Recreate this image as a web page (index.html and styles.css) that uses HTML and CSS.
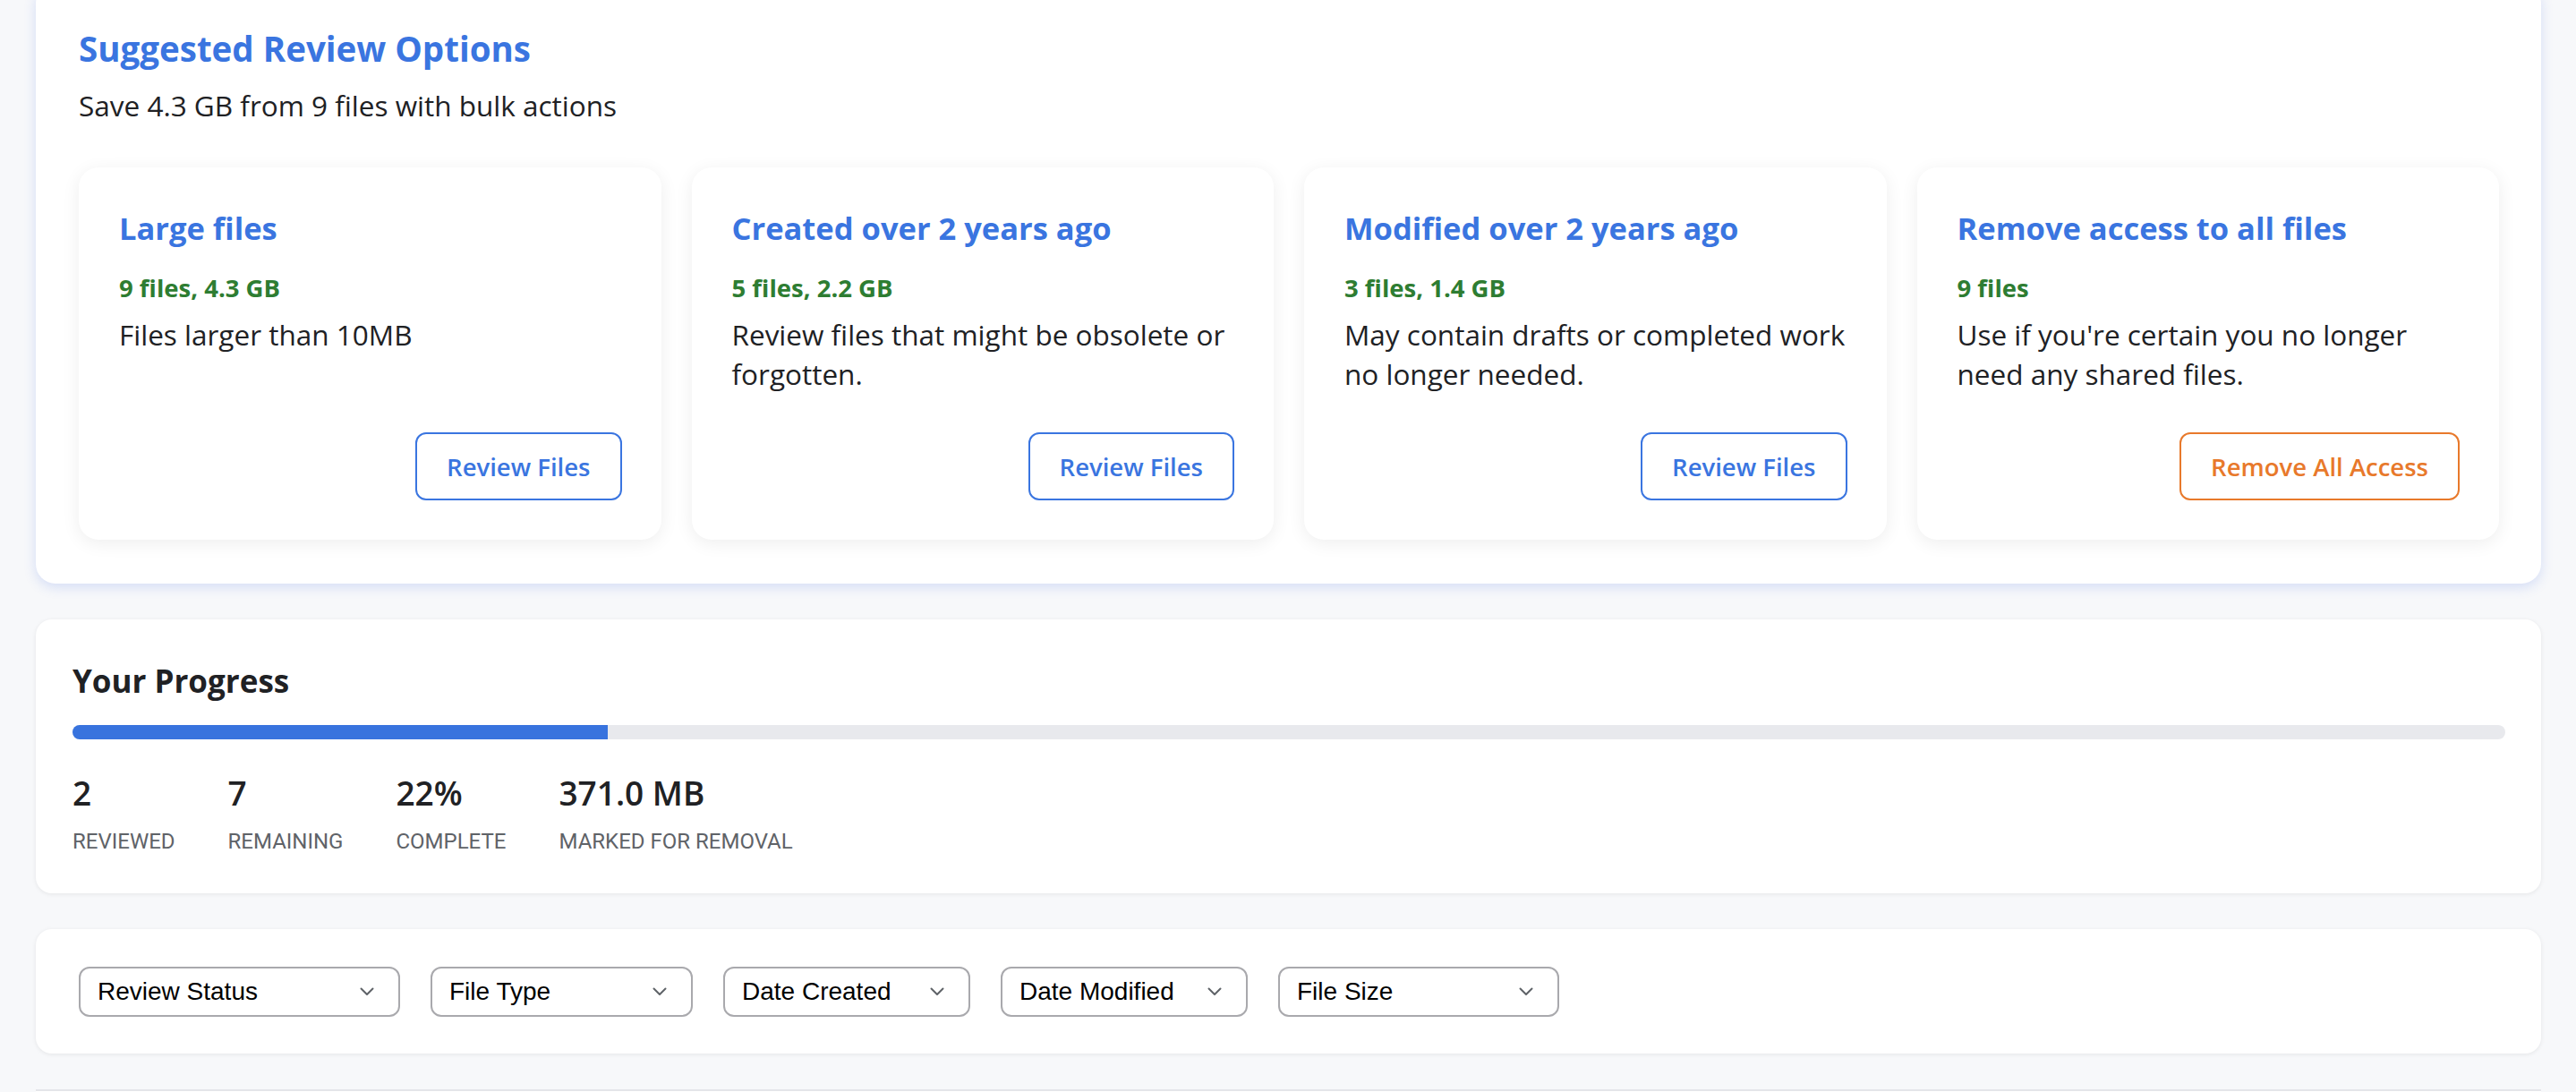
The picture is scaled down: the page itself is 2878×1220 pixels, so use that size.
FILE: index.html
```html
<!DOCTYPE html>
<html lang="en">
<head>
<meta charset="utf-8">
<title>Review Options</title>
<link rel="stylesheet" href="styles.css">
</head>
<body>
<div class="page">
  <section class="suggest">
    <h1 class="suggest-title">Suggested Review Options</h1>
    <p class="suggest-sub">Save 4.3 GB from 9 files with bulk actions</p>
    <div class="options">
      <article class="option">
        <h2 class="option-title">Large files</h2>
        <div class="option-count">9 files, 4.3 GB</div>
        <p class="option-desc">Files larger than 10MB</p>
        <button class="btn btn-blue">Review Files</button>
      </article>
      <article class="option">
        <h2 class="option-title">Created over 2 years ago</h2>
        <div class="option-count">5 files, 2.2 GB</div>
        <p class="option-desc">Review files that might be obsolete or forgotten.</p>
        <button class="btn btn-blue">Review Files</button>
      </article>
      <article class="option">
        <h2 class="option-title">Modified over 2 years ago</h2>
        <div class="option-count">3 files, 1.4 GB</div>
        <p class="option-desc">May contain drafts or completed work no longer needed.</p>
        <button class="btn btn-blue">Review Files</button>
      </article>
      <article class="option">
        <h2 class="option-title">Remove access to all files</h2>
        <div class="option-count">9 files</div>
        <p class="option-desc">Use if you're certain you no longer need any shared files.</p>
        <button class="btn btn-orange">Remove All Access</button>
      </article>
    </div>
  </section>

  <section class="card progress">
    <h2 class="progress-title">Your Progress</h2>
    <div class="track"><div class="fill" style="width:22%"></div></div>
    <div class="stats">
      <div class="stat"><div class="stat-num">2</div><div class="stat-label">Reviewed</div></div>
      <div class="stat"><div class="stat-num">7</div><div class="stat-label">Remaining</div></div>
      <div class="stat"><div class="stat-num">22%</div><div class="stat-label">Complete</div></div>
      <div class="stat"><div class="stat-num">371.0 MB</div><div class="stat-label">Marked for removal</div></div>
    </div>
  </section>

  <section class="card filters">
    <div class="select sel-status"><span>Review Status</span><svg class="chev" viewBox="0 0 16 10" width="16" height="10"><path d="M1.5 1.5 L8 8 L14.5 1.5" fill="none" stroke="#5f6368" stroke-width="2" stroke-linecap="round" stroke-linejoin="round"/></svg></div>
    <div class="select sel-type"><span>File Type</span><svg class="chev" viewBox="0 0 16 10" width="16" height="10"><path d="M1.5 1.5 L8 8 L14.5 1.5" fill="none" stroke="#5f6368" stroke-width="2" stroke-linecap="round" stroke-linejoin="round"/></svg></div>
    <div class="select sel-created"><span>Date Created</span><svg class="chev" viewBox="0 0 16 10" width="16" height="10"><path d="M1.5 1.5 L8 8 L14.5 1.5" fill="none" stroke="#5f6368" stroke-width="2" stroke-linecap="round" stroke-linejoin="round"/></svg></div>
    <div class="select sel-modified"><span>Date Modified</span><svg class="chev" viewBox="0 0 16 10" width="16" height="10"><path d="M1.5 1.5 L8 8 L14.5 1.5" fill="none" stroke="#5f6368" stroke-width="2" stroke-linecap="round" stroke-linejoin="round"/></svg></div>
    <div class="select sel-size"><span>File Size</span><svg class="chev" viewBox="0 0 16 10" width="16" height="10"><path d="M1.5 1.5 L8 8 L14.5 1.5" fill="none" stroke="#5f6368" stroke-width="2" stroke-linecap="round" stroke-linejoin="round"/></svg></div>
  </section>

  <section class="card table-card"></section>
</div>
</body>
</html>
```

FILE: styles.css
```css
html, body {
  margin: 0;
  height: 1220px;
  overflow: hidden;
}
body {
  background: #f7f8fa;
  font-family: "Open Sans", "Lato", sans-serif;
  color: #202124;
}
.page {
  display: flex;
  flex-direction: column;
  gap: 40px;
  padding: 0 39px 0 40px;
  margin-top: -18px;
}
.suggest {
  background: #fff;
  border-radius: 22px;
  padding: 48px 47px 49px 48px;
  box-shadow: 0 4px 14px rgba(56, 100, 230, 0.18);
}
.suggest-title {
  margin: 0 0 20px;
  font-size: 38.5px;
  line-height: 48px;
  font-weight: 700;
  color: #3a75e0;
}
.suggest-sub {
  margin: 0 0 49px;
  font-size: 31.5px;
  line-height: 40px;
  font-weight: 400;
  color: #202124;
}
.options {
  display: grid;
  grid-template-columns: repeat(4, 1fr);
  gap: 34px;
}
.option {
  background: #fff;
  border-radius: 22px;
  box-shadow: 0 4px 20px rgba(0, 0, 0, 0.07);
  padding: 46px 36px 44px 45px;
  display: flex;
  flex-direction: column;
}
.option-title {
  margin: 0 0 28px;
  font-size: 34.5px;
  line-height: 44px;
  font-weight: 700;
  color: #3a75e0;
}
.option-count {
  font-size: 27.5px;
  line-height: 34px;
  font-weight: 700;
  color: #2e7d32;
  margin-bottom: 13px;
}
.option-desc {
  margin: 0 0 43px;
  font-size: 31.5px;
  line-height: 44px;
  font-weight: 400;
  color: #202124;
}
.btn {
  margin-top: auto;
  margin-right: 8px;
  align-self: flex-end;
  height: 76px;
  padding: 0 33px;
  border: 2px solid;
  border-radius: 12px;
  background: #fff;
  font-family: "Open Sans", "Lato", sans-serif;
  font-size: 27.5px;
  font-weight: 600;
}
.btn-blue {
  color: #3a75e0;
  border-color: #3a75e0;
}
.btn-orange {
  color: #e8792b;
  border-color: #e8792b;
}
.card {
  background: #fff;
  border-radius: 18px;
  box-shadow: 0 1px 5px rgba(0, 0, 0, 0.08);
}
.progress {
  padding: 47px 40px 44px 41px;
}
.progress-title {
  margin: 0 0 27px;
  font-size: 35px;
  line-height: 44px;
  font-weight: 700;
  color: #202124;
}
.track {
  height: 16px;
  border-radius: 8px;
  background: #e8e9ed;
  overflow: hidden;
}
.fill {
  height: 100%;
  background: #3873de;
}
.stats {
  display: flex;
  gap: 59px;
  margin-top: 37px;
}
.stat-num {
  font-size: 37px;
  line-height: 46px;
  font-weight: 600;
  color: #202124;
}
.stat-label {
  margin-top: 17px;
  font-family: "Roboto", "Open Sans", sans-serif;
  font-size: 24px;
  line-height: 28px;
  text-transform: uppercase;
  color: #5f6368;
}
.filters {
  display: flex;
  gap: 34px;
  padding: 42px 48px 41px;
}
.select {
  box-sizing: border-box;
  height: 56px;
  border: 2px solid #a9a9ad;
  border-radius: 12px;
  padding: 0 27px 0 19px;
  display: flex;
  align-items: center;
  justify-content: space-between;
  font-family: "Liberation Sans", Arial, sans-serif;
  font-size: 28px;
  color: #000;
}
.sel-status { width: 359px; }
.sel-type { width: 293px; }
.sel-created { width: 276px; }
.sel-modified { width: 276px; }
.sel-size { width: 314px; }
.chev {
  display: block;
}
.table-card {
  height: 200px;
  border-radius: 0;
  border-top: 2px solid #e4e5e9;
  box-shadow: none;
}
```
